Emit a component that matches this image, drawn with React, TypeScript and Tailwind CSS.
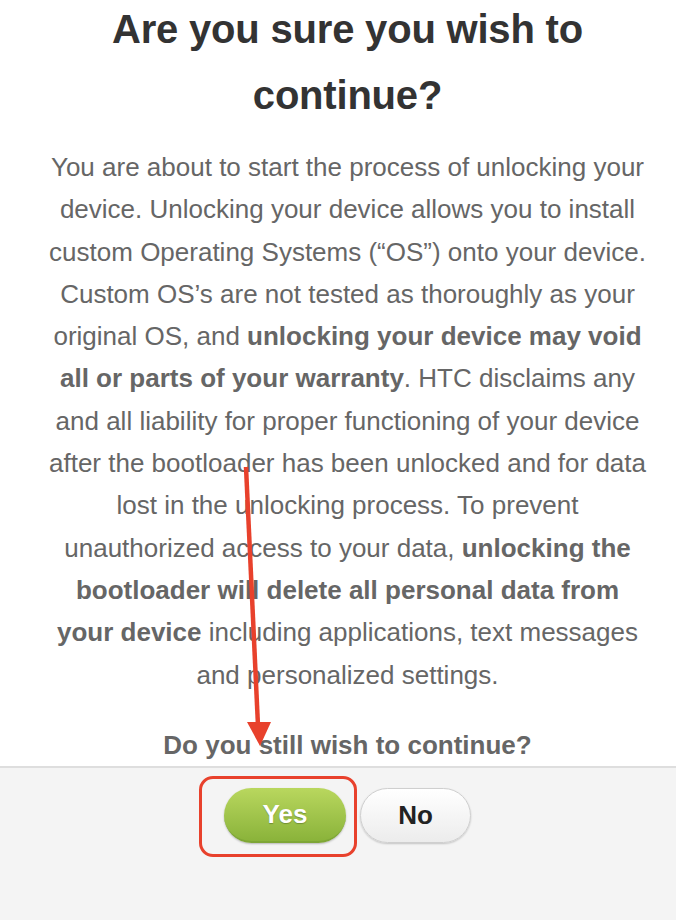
export default function App() {
  return (
    <div
      className="relative w-[676px] h-[920px] overflow-hidden bg-white flex flex-col"
      style={{ fontFamily: '"Liberation Sans", Arial, sans-serif' }}
    >
      {/* ── Dialog body ── */}
      <div className="flex flex-col items-center pl-[19px]">
        <h1 className="-mt-[4px] text-[40px] leading-[66px] font-bold text-[#333] text-center tracking-[-0.2px]">
          Are you sure you wish to
          <br />
          continue?
        </h1>

        <p className="mt-[18px] text-[26px] leading-[42.3px] text-[#666] text-center whitespace-nowrap">
          You are about to start the process of unlocking your
          <br />
          device. Unlocking your device allows you to install
          <br />
          custom Operating Systems (“OS”) onto your device.
          <br />
          Custom OS’s are not tested as thoroughly as your
          <br />
          original OS, and <b>unlocking your device may void</b>
          <br />
          <b>all or parts of your warranty</b>. HTC disclaims any
          <br />
          and all liability for proper functioning of your device
          <br />
          after the bootloader has been unlocked and for data
          <br />
          lost in the unlocking process. To prevent
          <br />
          unauthorized access to your data, <b>unlocking the</b>
          <br />
          <b>bootloader will delete all personal data from</b>
          <br />
          <b>your device</b> including applications, text messages
          <br />
          and personalized settings.
        </p>

        <p className="mt-[28px] text-[26px] leading-[42px] font-bold text-[#666] text-center">
          Do you still wish to continue?
        </p>
      </div>

      {/* ── Footer with buttons ── */}
      <div className="flex-1 border-t-2 border-[#dedede] bg-[#f4f4f4] pt-5 pl-[19px] flex justify-center items-start gap-[14px]">
        <div className="relative">
          <button className="w-[122px] h-[55px] rounded-full bg-gradient-to-b from-[#b9d75e] to-[#8ab33a] border-b-2 border-[#7ea636] shadow-[0_1px_2px_rgba(0,0,0,0.25)] text-white text-[26px] font-bold [text-shadow:0_1px_1px_rgba(0,0,0,0.25)]">
            Yes
          </button>
          {/* red highlight box */}
          <div className="absolute -left-[25px] -top-[12px] w-[158px] h-[81px] border-[3px] border-[#e8412c] rounded-[14px] pointer-events-none" />
        </div>
        <button className="w-[111px] h-[55px] rounded-full bg-gradient-to-b from-white to-[#ececec] border border-[#cfcfcf] shadow-[0_1px_2px_rgba(0,0,0,0.2)] text-[#222] text-[26px] font-bold">
          No
        </button>
      </div>

      {/* ── Annotation arrow ── */}
      <svg
        className="absolute left-0 top-0 pointer-events-none"
        width="676"
        height="920"
        viewBox="0 0 676 920"
      >
        <line x1="246" y1="467" x2="258" y2="726" stroke="#e8412c" strokeWidth="4.5" />
        <polygon points="247,722 271,722 260,746" fill="#e8412c" />
      </svg>
    </div>
  );
}
